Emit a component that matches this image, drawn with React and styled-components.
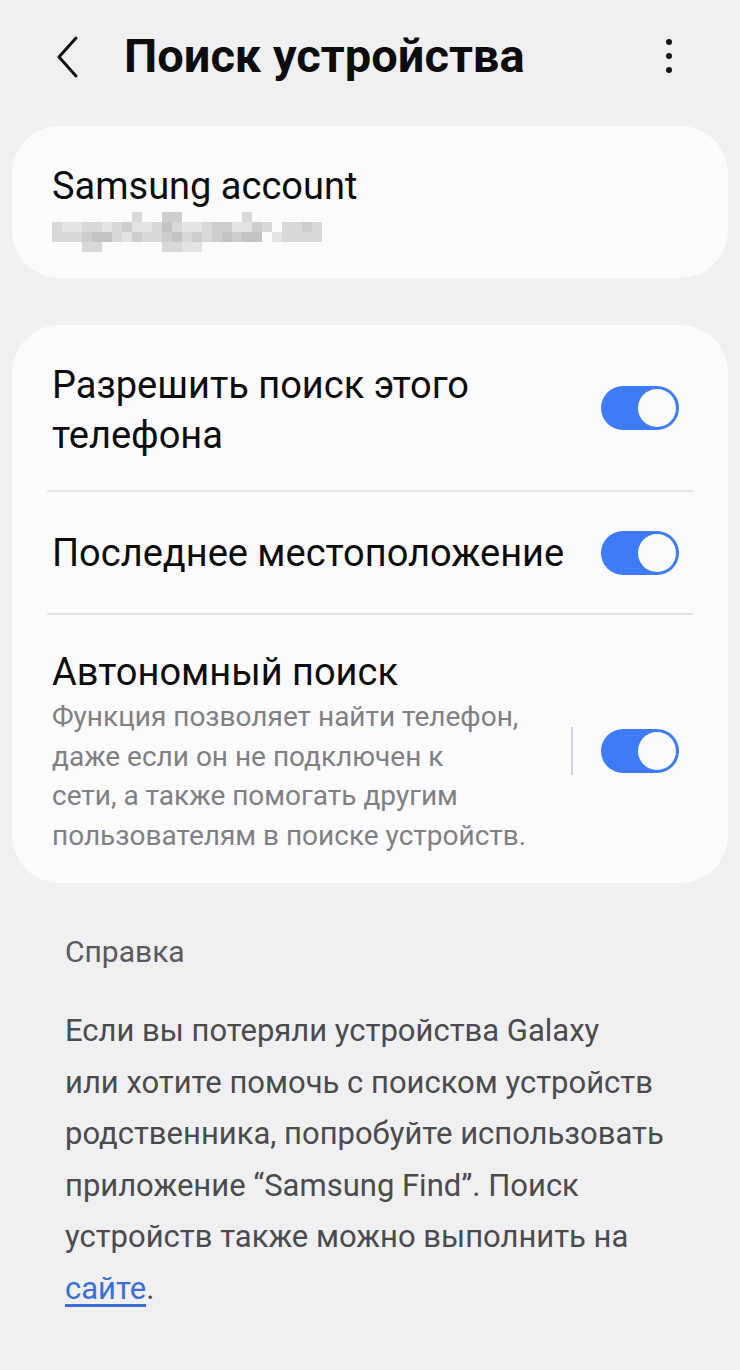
import React from 'react';
import styled, { createGlobalStyle } from 'styled-components';

const GlobalStyle = createGlobalStyle`
  html, body {
    margin: 0;
    padding: 0;
    background: #f0f0f3;
  }
  body {
    font-family: Roboto, "Noto Sans", sans-serif;
    color: #0c0c0c;
  }
`;

const Page = styled.div`
  width: 740px;
  min-height: 1370px;
  background: #f0f0f3;
  padding: 0 12px;
  box-sizing: border-box;
`;

const Header = styled.div`
  height: 114px;
  display: flex;
  align-items: center;
  padding-left: 42px;
  padding-right: 56px;
`;

const BackButton = styled.div`
  width: 30px;
  height: 44px;
  display: flex;
  align-items: center;
`;

const Title = styled.h1`
  flex: 1;
  margin: -4px 0 0 40px;
  font-size: 47px;
  font-weight: 700;
  letter-spacing: 0;
`;

const Menu = styled.div`
  display: flex;
  flex-direction: column;
  gap: 8px;
  margin-top: -2px;
  span {
    width: 6px;
    height: 6px;
    border-radius: 50%;
    background: #111;
  }
`;

const Card = styled.div`
  background: #fbfbfd;
  border-radius: 48px;
  padding: ${p => p.$pad || '0'};
  margin-top: ${p => p.$top || '0'};
`;

const AccountName = styled.div`
  font-size: 38px;
  line-height: 44px;
`;

const Blur = styled.div`
  display: grid;
  grid-template-columns: repeat(27, 10px);
  grid-auto-rows: 10px;
  margin-top: 4px;
`;

const Row = styled.div`
  display: flex;
  align-items: center;
  gap: 20px;
  padding: ${p => p.$pad};
  border-bottom: ${p => (p.$last ? 'none' : '2px solid #e4e4e7')};
  margin: 0 35px;
`;

const RowText = styled.div`
  flex: 1;
  padding-left: 5px;
`;

const RowTitle = styled.div`
  font-size: 38px;
  line-height: 50px;
`;

const RowDesc = styled.div`
  font-size: 28px;
  line-height: 39.5px;
  color: #808083;
`;

const VLine = styled.div`
  width: 2px;
  height: 48px;
  background: #d4d4d8;
  margin-right: 8px;
`;

const Toggle = styled.div`
  width: 78px;
  height: 44px;
  border-radius: 22px;
  background: #3e7cf7;
  position: relative;
  flex-shrink: 0;
  margin-right: 14px;
  margin-top: ${p => p.$shift || '0'};
  &::after {
    content: '';
    position: absolute;
    right: 3px;
    top: 3px;
    width: 38px;
    height: 38px;
    border-radius: 50%;
    background: #fbfbfd;
  }
`;

const Help = styled.div`
  padding: 0 53px;
  margin-top: 49px;
  color: #4b4b4e;
`;

const HelpTitle = styled.div`
  font-size: 30px;
  line-height: 40px;
  color: #5a5a5d;
`;

const HelpText = styled.p`
  margin: 33px 0 0;
  font-size: 31px;
  line-height: 51.6px;
  a {
    color: #3a6fd8;
    text-decoration: underline;
    text-underline-offset: 5px;
  }
`;

// pixelated e-mail: 4 rows x 27 columns of 10px cells
const blurRows = [
  '........b..cc......b.......',
  'baabbabcaabdbaabccaacb.bbcb',
  'bbbcddbacbbcdbcbcdcdd.abbbb',
  '...bb......bbaa............',
];
const shade = { a: '#e3e3e6', b: '#d8d8db', c: '#cdcdd0', d: '#c3c3c6', '.': 'transparent' };

export default function App() {
  return (
    <>
      <GlobalStyle />
      <Page>
        <Header>
          <BackButton>
            <svg width="26" height="44" viewBox="0 0 26 44" fill="none">
              <path d="M22 3 L5 22 L22 41" stroke="#111" strokeWidth="3" strokeLinecap="round" strokeLinejoin="round" />
            </svg>
          </BackButton>
          <Title>Поиск устройства</Title>
          <Menu>
            <span />
            <span />
            <span />
          </Menu>
        </Header>

        <Card $pad="38px 40px 26px" $top="12px">
          <AccountName>Samsung account</AccountName>
          <Blur>
            {blurRows.join('').split('').map((ch, i) => (
              <div key={i} style={{ background: shade[ch] }} />
            ))}
          </Blur>
        </Card>

        <Card $pad="10px 0" $top="47px">
          <Row $pad="25px 0 30px">
            <RowText>
              <RowTitle>Разрешить поиск этого<br />телефона</RowTitle>
            </RowText>
            <Toggle $shift="-5px" />
          </Row>
          <Row $pad="36px 0 35px">
            <RowText>
              <RowTitle>Последнее местоположение</RowTitle>
            </RowText>
            <Toggle />
          </Row>
          <Row $pad="32px 0 18px" $last>
            <RowText>
              <RowTitle>Автономный поиск</RowTitle>
              <RowDesc>
                Функция позволяет найти телефон,<br />
                даже если он не подключен к<br />
                сети, а также помогать другим<br />
                пользователям в поиске устройств.
              </RowDesc>
            </RowText>
            <VLine />
            <Toggle />
          </Row>
        </Card>

        <Help>
          <HelpTitle>Справка</HelpTitle>
          <HelpText>
            Если вы потеряли устройства Galaxy<br />
            или хотите помочь с поиском устройств<br />
            родственника, попробуйте использовать<br />
            приложение “Samsung Find”. Поиск<br />
            устройств также можно выполнить на<br />
            <a>сайте</a>.
          </HelpText>
        </Help>
      </Page>
    </>
  );
}
